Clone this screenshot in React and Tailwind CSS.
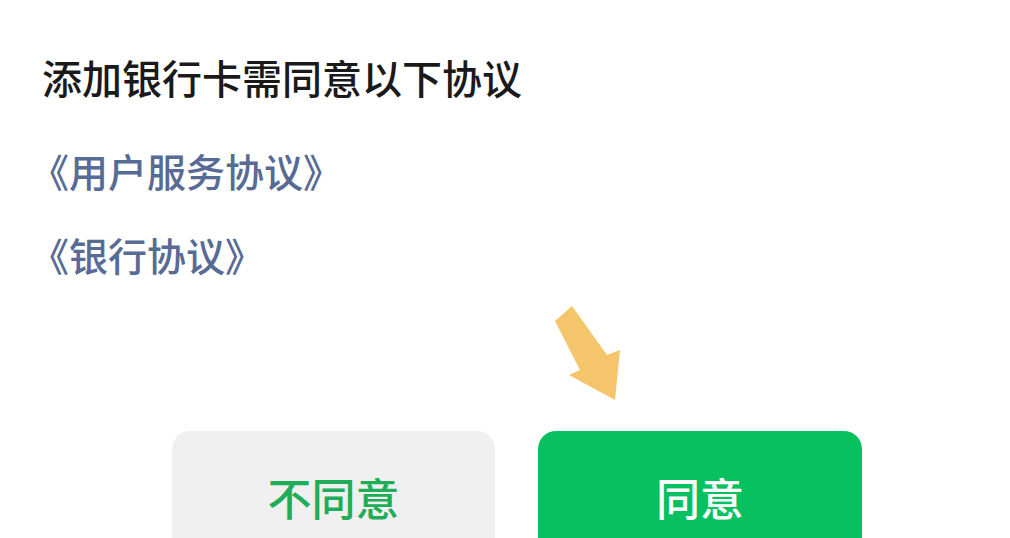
// 添加银行卡 — 协议确认弹层
const FONT = { fontFamily: '"Noto Sans CJK SC", "Noto Sans", sans-serif' };

const LINKS = ["《用户服务协议》", "《银行协议》"];

function Arrow() {
  return (
    <svg width="75" height="100" viewBox="0 0 75 100">
      <polygon
        points="5,18 22,3 57,52 70,47 65,97 19,72 30,67"
        fill="#f5c56b"
      />
    </svg>
  );
}

export default function App() {
  return (
    <div className="h-[538px] w-[1010px] overflow-hidden bg-white" style={FONT}>
      <h1 className="pl-[42px] pt-[57px] text-[40px] leading-[40px] font-medium text-[#1a1a1a]">
        添加银行卡需同意以下协议
      </h1>

      <div className="mt-[54px] flex flex-col gap-[45px] pl-[30px]">
        {LINKS.map((t) => (
          <p key={t} className="text-[39px] leading-[39px] font-medium text-[#576b95]">
            {t}
          </p>
        ))}
      </div>

      <div className="mt-[29px] pl-[550px]">
        <Arrow />
      </div>

      <div className="mt-[28px] flex gap-[43px] pl-[172px]">
        <button className="flex h-[132px] w-[323px] items-center justify-center rounded-[18px] bg-[#f0f0f0] text-[44px] font-medium text-[#1fad5a]">
          不同意
        </button>
        <button className="flex h-[132px] w-[324px] items-center justify-center rounded-[18px] bg-[#07c160] text-[44px] font-medium text-white">
          同意
        </button>
      </div>
    </div>
  );
}
